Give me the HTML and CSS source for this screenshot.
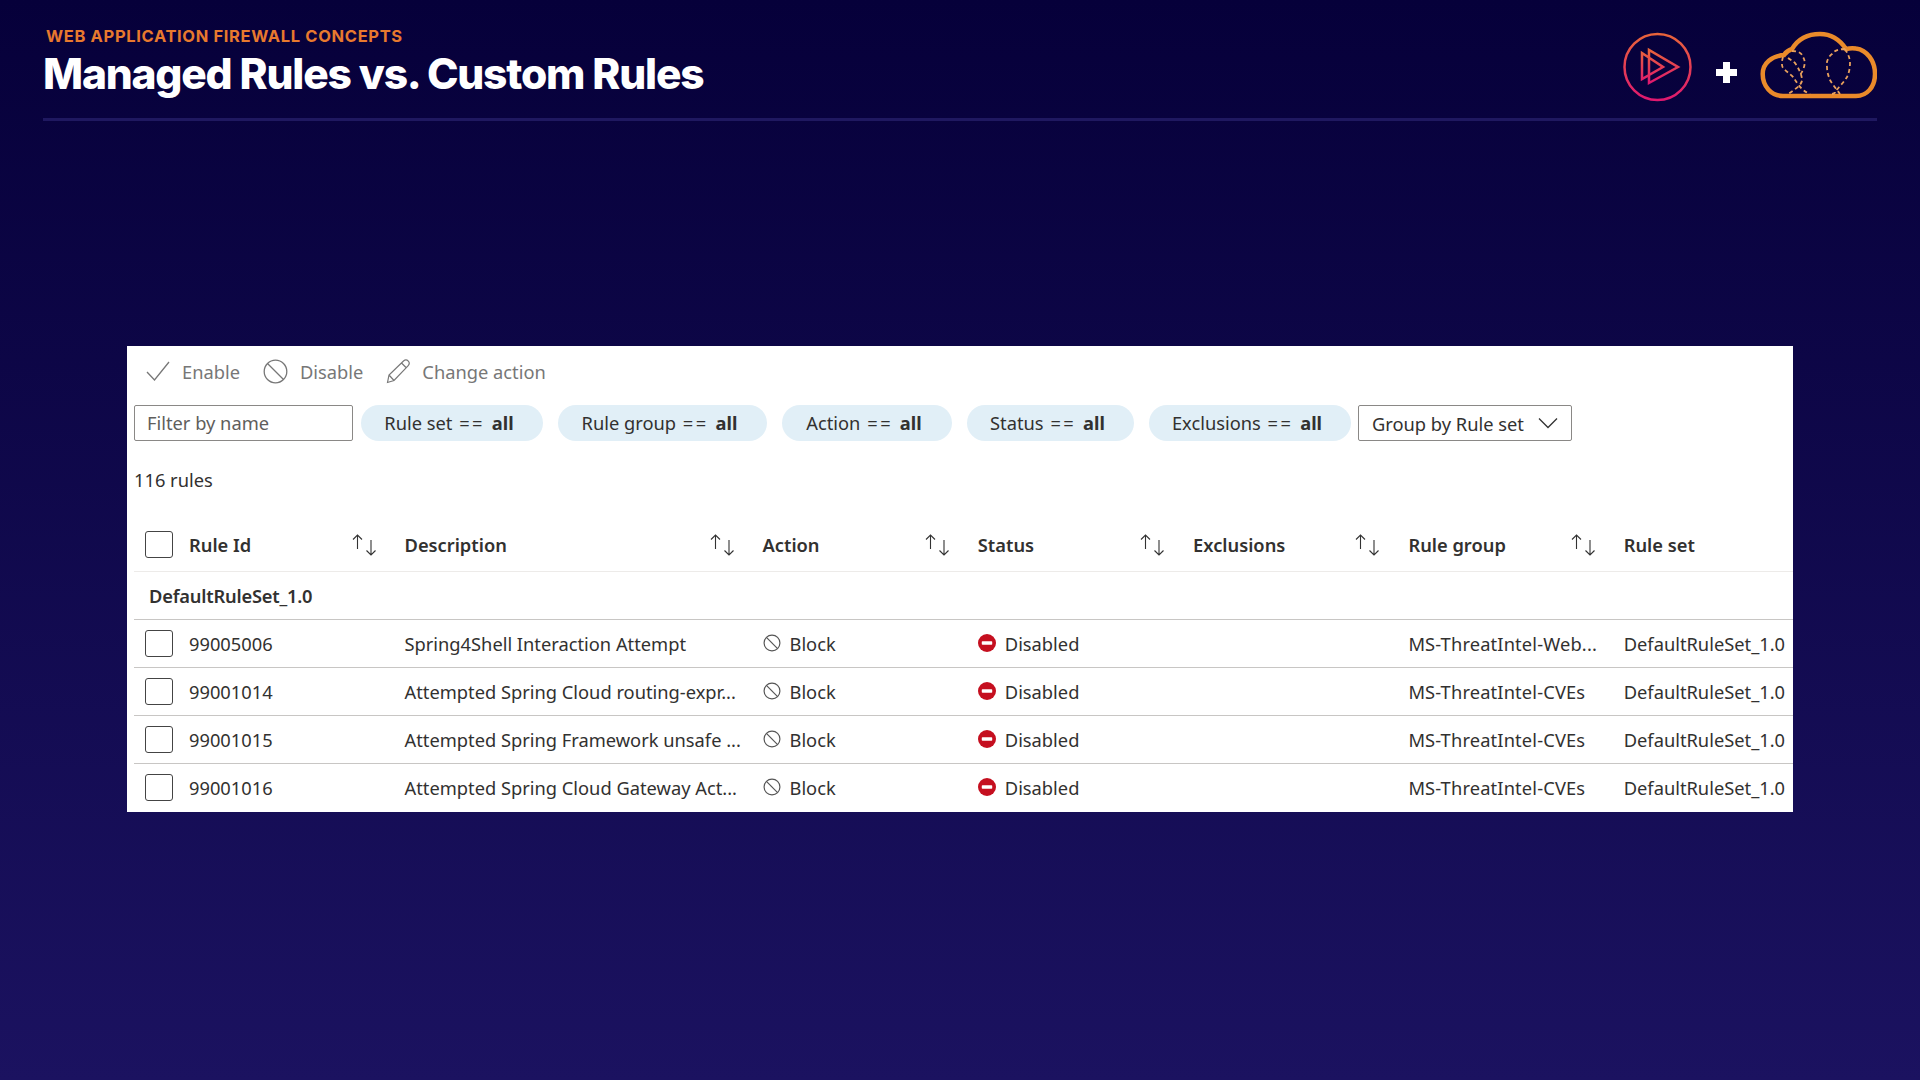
FILE: index.html
```html
<!DOCTYPE html>
<html lang="en">

<head>
  <meta charset="UTF-8">
  <title>Managed Rules vs. Custom Rules</title>
  <link rel="stylesheet" href="styles.css">
</head>

<body>

  <svg class="defs" width="0" height="0">
    <defs>
      <linearGradient id="ps-grad" x1="0" y1="0" x2="0" y2="1">
        <stop offset="0" stop-color="#e8643a"></stop>
        <stop offset="1" stop-color="#e0186f"></stop>
      </linearGradient>
      <symbol id="sort" viewBox="0 0 26 22">
        <path d="M5.5 15V1M1 5.5 5.5 1 10 5.5M19 6v15M14.5 16.5 19 21l4.5-4.5" fill="none" stroke="#333" stroke-width="1.1"></path>
      </symbol>
      <symbol id="block" viewBox="0 0 20 20">
        <circle cx="10" cy="10" r="8.8" fill="none" stroke="#555" stroke-width="1.3"></circle>
        <path d="M3.8 3.8 16.2 16.2" stroke="#555" stroke-width="1.3"></path>
      </symbol>
      <symbol id="disabled" viewBox="0 0 20 20">
        <circle cx="10" cy="10" r="10" fill="#c50f1f"></circle>
        <rect x="4.2" y="8" width="11.6" height="4" rx="0.8" fill="#fff"></rect>
      </symbol>
    </defs>
  </svg>

  <header class="top">
    <div class="titles">
      <div class="eyebrow">WEB APPLICATION FIREWALL CONCEPTS</div>
      <h1>Managed Rules vs. Custom Rules</h1>
    </div>
    <div class="logos">
      <svg width="70" height="70" viewBox="0 0 70 70">
        <circle cx="34.5" cy="35" r="33" fill="none" stroke="url(#ps-grad)" stroke-width="2.5"></circle>
        <path d="M19 21V47L40 35Z M26 18V51L55 35Z" fill="none" stroke="url(#ps-grad)" stroke-width="2.5"></path>
      </svg>
      <span class="plus"></span>
      <svg width="118" height="74" viewBox="0 0 118 74">
        <path d="M24 66C12 66 3.7 56 3.7 44C3.7 33 13 26 25 25C27 22 30 20 33 19C39 9 49 4 61 4C72 4 81 10 87 19C91 18 94 18 97 18.5C108 20 116 31 116 44C116 57 108 66 97 66Z" fill="none" stroke="#ea8a2a" stroke-width="4.5"></path>
        <path d="M24 27C22 33 23 38 25 39C28 42 31 44 34 47C38 52 41 60 51 64M29 28C32 30 34 31 36 33C40 39 43 45 43 50C43 55 35 60 29 64M33 21C39 21 43 23 44 27C47 31 46 38 41 45M86 19C79 19 75 21 73 24C69 27 67 32 68 37C68 43 70 47 71 50C74 55 78 60 81 64M86 19C89 24 91 28 91 33C91 38 90 43 88 47C85 52 80 57 76 62M73 64C74 64 76 63 76 62" fill="none" stroke="#e9a15c" stroke-width="1.8" stroke-dasharray="4 3"></path>
      </svg>
    </div>
  </header>
  <div class="rule"></div>

  <main class="panel">
    <div class="toolbar">
      <span class="tool">
        <svg width="24" height="24" viewBox="0 0 24 24"><path d="M1 13 8.5 21 23 3" fill="none" stroke="#777" stroke-width="1.3"></path></svg>
        Enable
      </span>
      <span class="tool">
        <svg width="25" height="25" viewBox="0 0 25 25"><circle cx="12.5" cy="12.5" r="11.3" fill="none" stroke="#777" stroke-width="1.3"></circle><path d="M4.5 4.5 20.5 20.5" stroke="#777" stroke-width="1.3"></path></svg>
        Disable
      </span>
      <span class="tool">
        <svg width="24" height="25" viewBox="0 0 24 25"><path d="M1.5 23.5 3 16 17.5 2C19 .8 21 .8 22.3 2.2 23.5 3.5 23.3 5.5 22 6.8L8 21.5ZM3 16 8 21.5M15.5 4 20.5 9" fill="none" stroke="#777" stroke-width="1.2"></path></svg>
        Change action
      </span>
    </div>

    <div class="filters">
      <div class="field">Filter by name</div>
      <div class="pill">Rule set <span class="eq">==</span> <b>all</b></div>
      <div class="pill">Rule group <span class="eq">==</span> <b>all</b></div>
      <div class="pill">Action <span class="eq">==</span> <b>all</b></div>
      <div class="pill">Status <span class="eq">==</span> <b>all</b></div>
      <div class="pill">Exclusions <span class="eq">==</span> <b>all</b></div>
      <div class="dropdown">
        Group by Rule set
        <svg width="20" height="12" viewBox="0 0 20 12"><path d="M1 1.5 10 10.5 19 1.5" fill="none" stroke="#333" stroke-width="1.3"></path></svg>
      </div>
    </div>

    <div class="count">116 rules</div>

    <div class="row head">
      <span class="cell check"><i class="box"></i></span>
      <span class="cell id">Rule Id<svg class="sort"><use href="#sort"></use></svg></span>
      <span class="cell desc">Description<svg class="sort"><use href="#sort"></use></svg></span>
      <span class="cell act">Action<svg class="sort"><use href="#sort"></use></svg></span>
      <span class="cell stat">Status<svg class="sort"><use href="#sort"></use></svg></span>
      <span class="cell excl">Exclusions<svg class="sort"><use href="#sort"></use></svg></span>
      <span class="cell grp">Rule group<svg class="sort"><use href="#sort"></use></svg></span>
      <span class="cell set">Rule set</span>
    </div>

    <div class="group">DefaultRuleSet_1.0</div>

    <div class="row item">
      <span class="cell check"><i class="box"></i></span>
      <span class="cell id">99005006</span>
      <span class="cell desc">Spring4Shell Interaction Attempt</span>
      <span class="cell act"><svg class="ico"><use href="#block"></use></svg>Block</span>
      <span class="cell stat"><svg class="ico"><use href="#disabled"></use></svg>Disabled</span>
      <span class="cell excl"></span>
      <span class="cell grp">MS-ThreatIntel-Web...</span>
      <span class="cell set">DefaultRuleSet_1.0</span>
    </div>
    <div class="row item">
      <span class="cell check"><i class="box"></i></span>
      <span class="cell id">99001014</span>
      <span class="cell desc">Attempted Spring Cloud routing-expr...</span>
      <span class="cell act"><svg class="ico"><use href="#block"></use></svg>Block</span>
      <span class="cell stat"><svg class="ico"><use href="#disabled"></use></svg>Disabled</span>
      <span class="cell excl"></span>
      <span class="cell grp">MS-ThreatIntel-CVEs</span>
      <span class="cell set">DefaultRuleSet_1.0</span>
    </div>
    <div class="row item">
      <span class="cell check"><i class="box"></i></span>
      <span class="cell id">99001015</span>
      <span class="cell desc">Attempted Spring Framework unsafe ...</span>
      <span class="cell act"><svg class="ico"><use href="#block"></use></svg>Block</span>
      <span class="cell stat"><svg class="ico"><use href="#disabled"></use></svg>Disabled</span>
      <span class="cell excl"></span>
      <span class="cell grp">MS-ThreatIntel-CVEs</span>
      <span class="cell set">DefaultRuleSet_1.0</span>
    </div>
    <div class="row item">
      <span class="cell check"><i class="box"></i></span>
      <span class="cell id">99001016</span>
      <span class="cell desc">Attempted Spring Cloud Gateway Act...</span>
      <span class="cell act"><svg class="ico"><use href="#block"></use></svg>Block</span>
      <span class="cell stat"><svg class="ico"><use href="#disabled"></use></svg>Disabled</span>
      <span class="cell excl"></span>
      <span class="cell grp">MS-ThreatIntel-CVEs</span>
      <span class="cell set">DefaultRuleSet_1.0</span>
    </div>
  </main>

</body>

</html>
```

FILE: styles.css
```css
html,
body {
  height: 100%;
}

body {
  background: linear-gradient(180deg, #06003a 0%, #1b1260 100%);
  box-sizing: border-box;
  color: #323130;
  font-family: "Noto Sans", "Open Sans", sans-serif;
  height: 1080px;
  margin: 0;
  overflow: hidden;
  padding: 0 43px;
  width: 1920px;
}

.defs {
  display: block;
  height: 0;
}

.top {
  align-items: flex-start;
  display: flex;
  height: 118px;
  justify-content: space-between;
}

.titles {
  padding-top: 26px;
}

.eyebrow {
  color: #e8792e;
  font-family: "Inter", sans-serif;
  font-size: 16.5px;
  font-weight: 700;
  letter-spacing: .65px;
  line-height: 20px;
  margin-left: 3px;
}

h1 {
  color: #fff;
  font-family: "Inter", sans-serif;
  font-size: 42.5px;
  font-weight: 800;
  letter-spacing: -1.2px;
  line-height: 50px;
  margin: 3px 0 0;
}

.logos {
  align-items: center;
  display: flex;
  height: 70px;
  margin-top: 32px;
}

.plus {
  background:
    linear-gradient(#fff, #fff) center / 100% 7px no-repeat,
    linear-gradient(#fff, #fff) center / 7px 100% no-repeat;
  height: 21px;
  margin: 10px 22px 0 23px;
  width: 21px;
}

.rule {
  background: #1f1860;
  height: 3px;
}

.panel {
  background: #fff;
  box-sizing: border-box;
  font-size: 18.3px;
  height: 466px;
  margin: 225px 0 0 84px;
  padding: 0 0 0 7px;
  width: 1666px;
}

.toolbar {
  align-items: center;
  color: #777;
  display: flex;
  gap: 23px;
  height: 50px;
  padding-left: 12px;
}

.tool {
  align-items: center;
  display: flex;
  gap: 12px;
}

.filters {
  align-items: center;
  display: flex;
  height: 36px;
  margin-top: 9px;
}

.field {
  border: 1px solid #8a8886;
  border-radius: 2px;
  box-sizing: border-box;
  color: #605e5c;
  height: 36px;
  line-height: 33px;
  padding-left: 12px;
  width: 219px;
}

.pill {
  background: #e1eff7;
  border-radius: 18px;
  box-sizing: border-box;
  height: 36px;
  line-height: 35px;
  margin-left: 8px;
  margin-right: 7px;
  padding-right: 6px;
  text-align: center;
  width: 182px;
}

.pill:nth-child(3) {
  width: 209px;
}

.pill:nth-child(4) {
  width: 170px;
}

.pill:nth-child(5) {
  width: 167px;
}

.pill:nth-child(6) {
  width: 202px;
}

.pill b {
  font-weight: 700;
}

.eq {
  letter-spacing: 2.5px;
  margin: 0 2px;
}

.dropdown {
  align-items: center;
  border: 1px solid #8a8886;
  border-radius: 2px;
  box-sizing: border-box;
  display: flex;
  height: 36px;
  justify-content: space-between;
  padding: 0 13px;
  width: 214px;
}

.count {
  height: 50px;
  line-height: 50px;
  margin-top: 14px;
}

.row {
  display: flex;
}

.head {
  border-bottom: 1px solid #edebe9;
  font-weight: 600;
  height: 53px;
  margin-top: 13px;
}

.item {
  border-top: 1px solid #c8c6c4;
  height: 47px;
}

.cell {
  align-items: center;
  box-sizing: border-box;
  display: flex;
  white-space: nowrap;
}

.check {
  padding-left: 11px;
  width: 55px;
}

.box {
  border: 1px solid #444;
  border-radius: 3px;
  box-sizing: border-box;
  height: 27px;
  width: 28px;
}

.id {
  width: 215.5px;
}

.desc {
  width: 358px;
}

.act,
.stat,
.excl,
.grp {
  width: 215.3px;
}

.item .grp {
  letter-spacing: .15px;
}

.set {
  flex: 1;
}

.sort {
  flex: none;
  height: 22px;
  margin-left: auto;
  margin-right: 27px;
  width: 26px;
}

.ico {
  flex: none;
  height: 18px;
  margin-bottom: 2px;
  margin-right: 9px;
  width: 18px;
}

.group {
  font-weight: 600;
  height: 47px;
  letter-spacing: -.2px;
  line-height: 47px;
  padding-left: 15px;
}
```
